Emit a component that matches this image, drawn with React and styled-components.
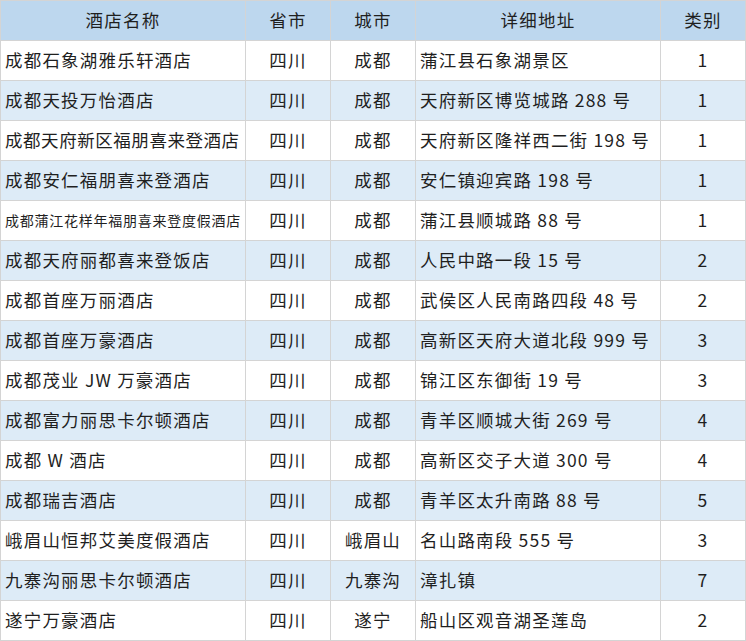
import styled, { createGlobalStyle } from 'styled-components'

const GlobalStyle = createGlobalStyle`
    html, body {
        margin: 0;
        padding: 0;
        background: #fff;
    }
`

const StyledTable = styled.div`
    display: grid;
    grid-template-columns: 244px 84px 84px 244px 84px;
    grid-auto-rows: 39px;
    gap: 1px;
    padding: 1px;
    width: 746px;
    box-sizing: border-box;
    background-color: #d4d4d4;
    font-family: "Noto Sans CJK SC", "Noto Sans", sans-serif;
    color: #1f1f1f;
`

const spacing = {
    small: "0.75px",
    tight: "0.55px",
    normal: "1.2px",
}

const StyledCell = styled.div`
    display: flex;
    align-items: center;
    justify-content: ${(props) => props.left ? "flex-start" : "center"};
    padding: ${(props) => props.left ? "0 0 2px 4px" : "0 0 2px 0"};
    background-color: ${(props) => props.head ? "#bdd7ee" : props.stripe ? "#ddebf7" : "#fff"};
    font-size: ${(props) => props.fit === "small" ? "14px" : "17.5px"};
    letter-spacing: ${(props) => spacing[props.fit || "normal"]};
    white-space: nowrap;
    overflow: hidden;
`

const hotels = [
    { name: "成都石象湖雅乐轩酒店", prov: "四川", city: "成都", addr: "蒲江县石象湖景区", type: 1 },
    { name: "成都天投万怡酒店", prov: "四川", city: "成都", addr: "天府新区博览城路 288 号", type: 1 },
    { name: "成都天府新区福朋喜来登酒店", prov: "四川", city: "成都", addr: "天府新区隆祥西二街 198 号", type: 1, fit: "tight" },
    { name: "成都安仁福朋喜来登酒店", prov: "四川", city: "成都", addr: "安仁镇迎宾路 198 号", type: 1 },
    { name: "成都蒲江花样年福朋喜来登度假酒店", prov: "四川", city: "成都", addr: "蒲江县顺城路 88 号", type: 1, fit: "small" },
    { name: "成都天府丽都喜来登饭店", prov: "四川", city: "成都", addr: "人民中路一段 15 号", type: 2 },
    { name: "成都首座万丽酒店", prov: "四川", city: "成都", addr: "武侯区人民南路四段 48 号", type: 2 },
    { name: "成都首座万豪酒店", prov: "四川", city: "成都", addr: "高新区天府大道北段 999 号", type: 3 },
    { name: "成都茂业 JW 万豪酒店", prov: "四川", city: "成都", addr: "锦江区东御街 19 号", type: 3 },
    { name: "成都富力丽思卡尔顿酒店", prov: "四川", city: "成都", addr: "青羊区顺城大街 269 号", type: 4 },
    { name: "成都 W 酒店", prov: "四川", city: "成都", addr: "高新区交子大道 300 号", type: 4 },
    { name: "成都瑞吉酒店", prov: "四川", city: "成都", addr: "青羊区太升南路 88 号", type: 5 },
    { name: "峨眉山恒邦艾美度假酒店", prov: "四川", city: "峨眉山", addr: "名山路南段 555 号", type: 3 },
    { name: "九寨沟丽思卡尔顿酒店", prov: "四川", city: "九寨沟", addr: "漳扎镇", type: 7 },
    { name: "遂宁万豪酒店", prov: "四川", city: "遂宁", addr: "船山区观音湖圣莲岛", type: 2 },
]

const App = () => {
    return (
        <>
            <GlobalStyle />
            <StyledTable>
                <StyledCell head>酒店名称</StyledCell>
                <StyledCell head>省市</StyledCell>
                <StyledCell head>城市</StyledCell>
                <StyledCell head>详细地址</StyledCell>
                <StyledCell head>类别</StyledCell>
                {
                    hotels.map((item, i) => {
                        const stripe = i % 2 === 1
                        return [
                            <StyledCell key={`n${i}`} left stripe={stripe} fit={item.fit}>{item.name}</StyledCell>,
                            <StyledCell key={`p${i}`} stripe={stripe}>{item.prov}</StyledCell>,
                            <StyledCell key={`c${i}`} stripe={stripe}>{item.city}</StyledCell>,
                            <StyledCell key={`a${i}`} left stripe={stripe}>{item.addr}</StyledCell>,
                            <StyledCell key={`t${i}`} stripe={stripe}>{item.type}</StyledCell>,
                        ]
                    })
                }
            </StyledTable>
        </>
    )
}

export default App
